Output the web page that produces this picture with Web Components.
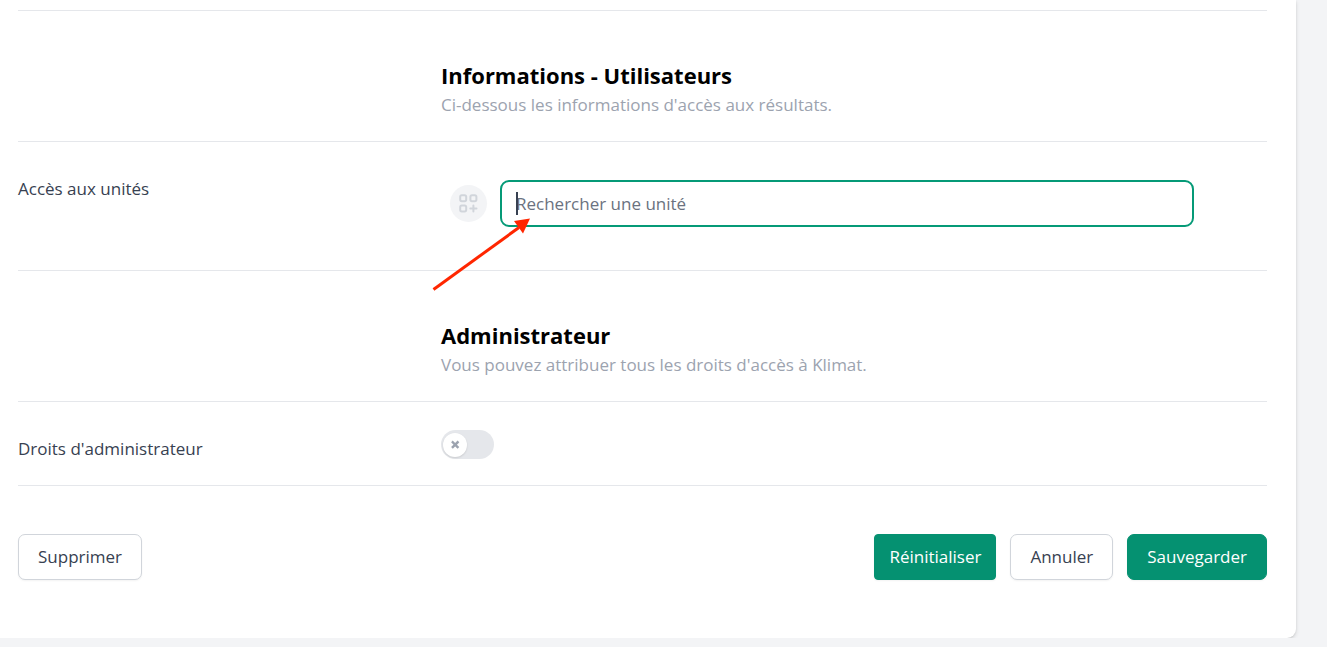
<!DOCTYPE html>
<html lang="fr">
<head>
<meta charset="utf-8">
<meta name="viewport" content="width=device-width, initial-scale=1">
<title>Utilisateur</title>
<style>
  body {
    margin: 0;
    background-color: #f3f4f6;
    color: #374151;
    font-family: "Open Sans", "Noto Sans", sans-serif;
    font-size: 17px;
    line-height: 26px;
  }
</style>
</head>
<body>

<form-card>
  <form-heading>
    <span slot="title">Informations - Utilisateurs</span>
    <span slot="text">Ci-dessous les informations d'accès aux résultats.</span>
  </form-heading>
  <form-row label="Accès aux unités">
    <unit-search label="Accès aux unités" placeholder="Rechercher une unité"></unit-search>
  </form-row>
  <form-heading>
    <span slot="title">Administrateur</span>
    <span slot="text">Vous pouvez attribuer tous les droits d'accès à Klimat.</span>
  </form-heading>
  <form-row label="Droits d'administrateur">
    <toggle-switch label="Droits d'administrateur"></toggle-switch>
  </form-row>
  <form-actions>
    <action-button slot="start">Supprimer</action-button>
    <action-button kind="reset">Réinitialiser</action-button>
    <action-button>Annuler</action-button>
    <action-button kind="primary">Sauvegarder</action-button>
  </form-actions>
</form-card>

<script>
function define(name, html, setup) {
  const template = document.createElement('template');
  template.innerHTML = html;

  customElements.define(name, class extends HTMLElement {
    constructor() {
      super();
      this.attachShadow({ mode: 'open' });
      this.shadowRoot.appendChild(template.content.cloneNode(true));
    }

    connectedCallback() {
      if (setup) setup(this, this.shadowRoot);
    }
  });
}

define('form-card', `
  <style>
    :host {
      display: block;
      margin-right: 31px;
      padding: 10px 29px 58px 18px;
      background-color: #fff;
      border-bottom-right-radius: 9px;
      box-shadow: 0 2px 4px rgba(0, 0, 0, .12), 0 1px 2px rgba(0, 0, 0, .08);
    }
  </style>
  <slot></slot>
`);

define('form-heading', `
  <style>
    :host {
      display: grid;
      grid-template-columns: 1fr 2fr;
      column-gap: 10px;
      border-top: 1px solid #e5e7eb;
      padding: 49px 0 23px;
    }
    div { grid-column: 2; }
    h3 {
      margin: 0;
      color: #000;
      font-size: 22px;
      line-height: 30px;
      font-weight: 700;
    }
    p {
      margin: 2px 0 0;
      color: #9ca3af;
    }
  </style>
  <div>
    <h3><slot name="title"></slot></h3>
    <p><slot name="text"></slot></p>
  </div>
`);

define('form-row', `
  <style>
    :host {
      display: grid;
      grid-template-columns: 1fr 2fr;
      column-gap: 10px;
      border-top: 1px solid #e5e7eb;
      padding: 28px 0 23px;
    }
    .label { padding-top: 6px; }
  </style>
  <div class="label"></div>
  <div><slot></slot></div>
`, (host, root) => {
  root.querySelector('.label').textContent = host.getAttribute('label');
});

define('unit-search', `
  <style>
    :host {
      display: flex;
      align-items: center;
      gap: 13px;
      padding: 10px 73px 20px 9px;
    }
    .badge {
      flex: none;
      width: 37px;
      height: 37px;
      border-radius: 50%;
      background-color: #f3f4f6;
      color: #d1d5db;
    }
    .field {
      position: relative;
      flex: 1;
    }
    input {
      display: block;
      box-sizing: border-box;
      width: 100%;
      height: 47px;
      padding: 0 14px;
      border: 2px solid #059a77;
      border-radius: 9px;
      background-color: #fff;
      color: #374151;
      font: inherit;
      outline: none;
    }
    input::placeholder {
      color: #6b7280;
      opacity: 1;
    }
    .caret {
      position: absolute;
      left: 16px;
      top: 12px;
      width: 2px;
      height: 23px;
      background-color: #374151;
    }
    .arrow {
      position: absolute;
      left: -70px;
      top: 36px;
      pointer-events: none;
    }
  </style>
  <svg class="badge" viewBox="0 0 37 37" fill="none" stroke="currentColor" stroke-width="2" aria-hidden="true">
    <rect x="10.2" y="10.2" width="6" height="6" rx="1.6"/>
    <rect x="20.4" y="10.2" width="6" height="6" rx="1.6"/>
    <rect x="10.2" y="20.4" width="6" height="6" rx="1.6"/>
    <path d="M23.4 20.4v6.2M20.3 23.5h6.2" stroke-linecap="round"/>
  </svg>
  <div class="field">
    <input type="text">
    <span class="caret"></span>
    <svg class="arrow" width="104" height="80" viewBox="0 0 104 80" aria-hidden="true">
      <path d="M3.5 73.5L89 11.5" stroke="#ff2600" stroke-width="3" fill="none"/>
      <path d="M100 2.5L84 5L93 17.5Z" fill="#ff2600"/>
    </svg>
  </div>
`, (host, root) => {
  const input = root.querySelector('input');
  input.placeholder = host.getAttribute('placeholder');
  input.setAttribute('aria-label', host.getAttribute('label'));
});

define('toggle-switch', `
  <style>
    :host { display: flex; }
    label {
      position: relative;
      display: block;
      width: 53px;
      height: 29px;
      cursor: pointer;
    }
    input {
      appearance: none;
      display: block;
      width: 100%;
      height: 100%;
      margin: 0;
      border-radius: 15px;
      background-color: #e5e7eb;
      cursor: pointer;
    }
    input:checked { background-color: #059171; }
    svg {
      position: absolute;
      left: 2px;
      top: 3px;
      border-radius: 50%;
      background-color: #fff;
      box-shadow: 0 1px 2px rgba(0, 0, 0, .12);
      color: #9ca3af;
    }
    input:checked + svg { left: 27px; }
  </style>
  <label>
    <input type="checkbox" role="switch">
    <svg width="24" height="24" viewBox="0 0 24 24" stroke="currentColor" stroke-width="2.4" aria-hidden="true">
      <path d="M9.8 9.3l4.8 4.8M14.6 9.3l-4.8 4.8" stroke-linecap="square"/>
    </svg>
  </label>
`, (host, root) => {
  root.querySelector('input').setAttribute('aria-label', host.getAttribute('label'));
});

define('form-actions', `
  <style>
    :host {
      display: flex;
      justify-content: space-between;
      border-top: 1px solid #e5e7eb;
      padding-top: 48px;
    }
    div {
      display: flex;
      gap: 14px;
    }
  </style>
  <div><slot name="start"></slot></div>
  <div><slot></slot></div>
`);

define('action-button', `
  <style>
    :host { display: block; }
    button {
      display: block;
      height: 46px;
      padding: 0 19px;
      border: 1px solid #d1d5db;
      border-radius: 7px;
      background-color: #fff;
      box-shadow: 0 1px 2px rgba(0, 0, 0, .05);
      color: #374151;
      font: inherit;
      cursor: pointer;
    }
    :host([kind]) button {
      border-color: #059171;
      background-color: #059171;
      color: #fff;
    }
    :host([kind="reset"]) button {
      padding: 0 14px;
      border-radius: 4px;
    }
  </style>
  <button type="button"><slot></slot></button>
`);
</script>
</body>
</html>
